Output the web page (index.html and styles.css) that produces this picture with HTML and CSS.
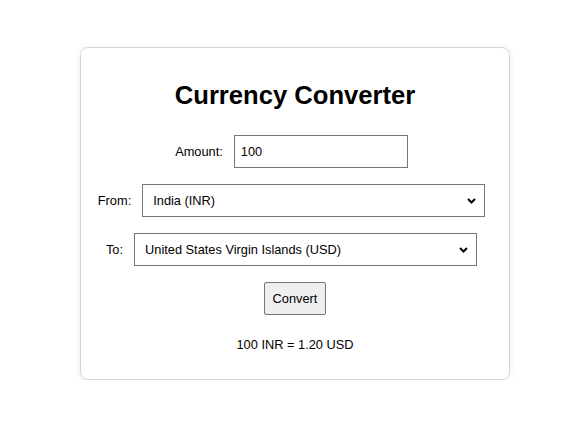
FILE: index.html
```html
<!DOCTYPE html>
<html>
<head>
<meta charset="utf-8">
<title>Currency Converter</title>
<link rel="stylesheet" href="styles.css">
</head>
<body>
<div class="card">
  <h1 class="title">Currency Converter</h1>
  <div class="row">
    <label class="label" for="amount">Amount:</label>
    <input class="amount" id="amount" type="text" value="100">
  </div>
  <div class="row">
    <label class="label" for="from">From:</label>
    <div class="select-wrap">
      <select class="select" id="from"><option>India (INR)</option></select>
      <svg class="chev" width="9" height="6" viewBox="0 0 9 6"><path d="M1 1 L4.5 4.5 L8 1" fill="none" stroke="#000" stroke-width="2"/></svg>
    </div>
  </div>
  <div class="row">
    <label class="label" for="to">To:</label>
    <div class="select-wrap">
      <select class="select" id="to"><option>United States Virgin Islands (USD)</option></select>
      <svg class="chev" width="9" height="6" viewBox="0 0 9 6"><path d="M1 1 L4.5 4.5 L8 1" fill="none" stroke="#000" stroke-width="2"/></svg>
    </div>
  </div>
  <button class="btn" type="button">Convert</button>
  <p class="result">100 INR = 1.20 USD</p>
</div>
</body>
</html>
```
FILE: styles.css
```css
html, body {
  margin: 0;
  padding: 0;
  background: #fff;
}
body {
  font-family: "Liberation Sans", Arial, sans-serif;
  font-size: 12.8px;
  color: #000;
  padding-top: 47px;
}
.card {
  box-sizing: border-box;
  width: 430px;
  margin-left: 80px;
  border: 1px solid #d6d6d6;
  border-radius: 8px;
  box-shadow: 0 1px 6px rgba(0,0,0,0.08);
  padding: 33px 0 27px;
  display: flex;
  flex-direction: column;
  align-items: center;
}
.title {
  margin: 0 0 25px;
  font-size: 25.6px;
  font-weight: bold;
  line-height: normal;
}
.row {
  display: flex;
  align-items: center;
  gap: 11px;
  margin: 0 7px 16px 0;
}
.label {
  font-size: 12.8px;
}
.amount {
  box-sizing: border-box;
  width: 174px;
  height: 33px;
  border: 1px solid #767676;
  border-radius: 0;
  padding: 0 6px;
  font-family: "Liberation Sans", Arial, sans-serif;
  font-size: 12.8px;
  color: #000;
  margin: 0;
}
.select-wrap {
  display: grid;
}
.select {
  grid-area: 1 / 1;
  -webkit-appearance: none;
  appearance: none;
  box-sizing: border-box;
  width: 343px;
  height: 33px;
  border: 1px solid #767676;
  border-radius: 0;
  background: #fff;
  padding: 0 24px 0 10px;
  font-family: "Liberation Sans", Arial, sans-serif;
  font-size: 12.8px;
  color: #000;
  margin: 0;
}
.chev {
  grid-area: 1 / 1;
  justify-self: end;
  align-self: center;
  margin-right: 9px;
  pointer-events: none;
}
.btn {
  box-sizing: border-box;
  width: 62px;
  height: 33px;
  border: 1px solid #767676;
  border-radius: 2px;
  background: #efefef;
  font-family: "Liberation Sans", Arial, sans-serif;
  font-size: 12.8px;
  color: #000;
  padding: 0;
  margin: 0 0 22px;
}
.result {
  margin: 0;
  font-size: 12.8px;
  line-height: normal;
}
```
